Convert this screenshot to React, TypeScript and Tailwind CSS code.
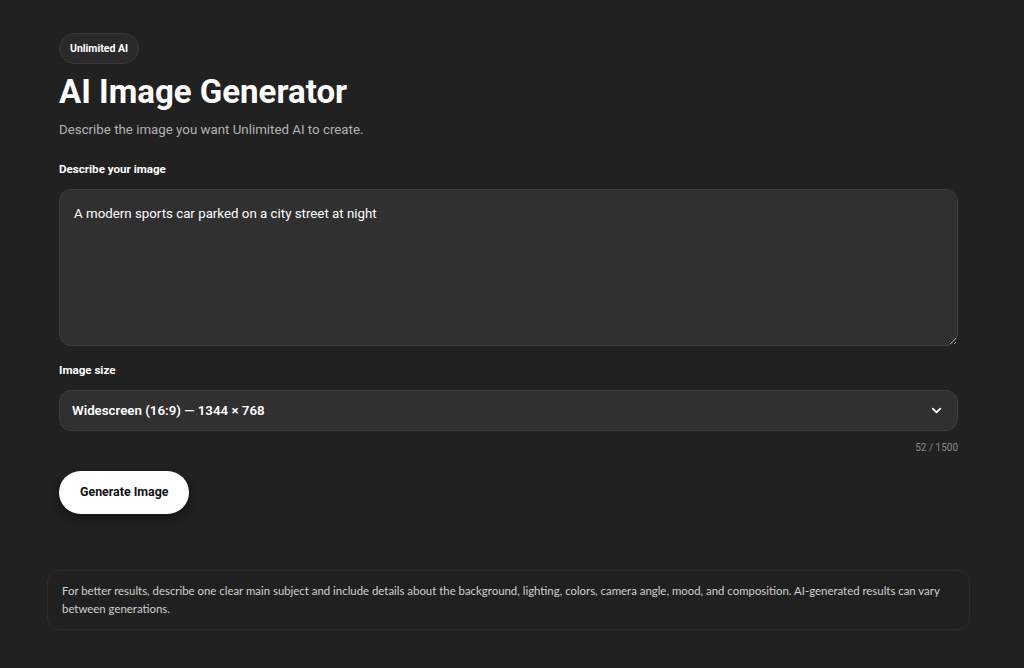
import React from 'react';
import { ChevronDown } from 'lucide-react';

const App: React.FC = () => {
    return (
        <div className="min-h-screen bg-[#212121] font-['Roboto',sans-serif] text-white">
            <div className="w-[923px] ml-[47px] pt-[33px] pb-10">
                <div className="px-3">
                    <span className="inline-flex items-center h-[31px] px-[10px] rounded-full border border-[#3a3a3a] bg-[#2a2a2a] text-[10.5px] font-bold">
                        Unlimited AI
                    </span>
                    <h1 className="mt-2 text-[33px] leading-10 font-bold">AI Image Generator</h1>
                    <p className="mt-[8px] text-[13.3px] leading-5 text-[#b3b3b3]">Describe the image you want Unlimited AI to create.</p>

                    <label className="block mt-[21px] text-[11.6px] leading-4 font-bold">Describe your image</label>
                    <textarea
                        className="block mt-3 w-full h-[157px] resize-y rounded-xl border border-[#3d3d3d] bg-[#303030] px-[14px] py-[14px] text-[13.3px] leading-5 text-white outline-none"
                        defaultValue="A modern sports car parked on a city street at night"
                    />

                    <label className="block mt-4 text-[11.6px] leading-4 font-bold">Image size</label>
                    <div className="mt-3 flex items-center justify-between h-[41px] rounded-xl border border-[#3d3d3d] bg-[#303030] pl-3 pr-[13px]">
                        <span className="text-[13.3px] font-semibold">Widescreen (16:9) — 1344 × 768</span>
                        <ChevronDown className="w-[15px] h-[15px]" strokeWidth={3} />
                    </div>
                    <div className="mt-[10px] text-right text-[10px] leading-[14px] text-[#8a8a8a]">52 / 1500</div>

                    <button className="mt-4 h-[43px] px-[21px] rounded-full bg-white text-[#111] text-[12.4px] font-bold shadow-[0_4px_12px_rgba(0,0,0,0.45)]">
                        Generate Image
                    </button>
                </div>

                <div className="mt-14 rounded-xl border border-[#2c2c2c] bg-[#202020] px-[14px] pt-[11px] pb-[11px] font-['Lato',sans-serif] text-[11.4px] leading-[18px] text-[#d0d0d0]">
                    For better results, describe one clear main subject and include details about the background, lighting, colors, camera angle, mood, and composition. AI-generated results can vary between generations.
                </div>
            </div>
        </div>
    );
};

export default App;
